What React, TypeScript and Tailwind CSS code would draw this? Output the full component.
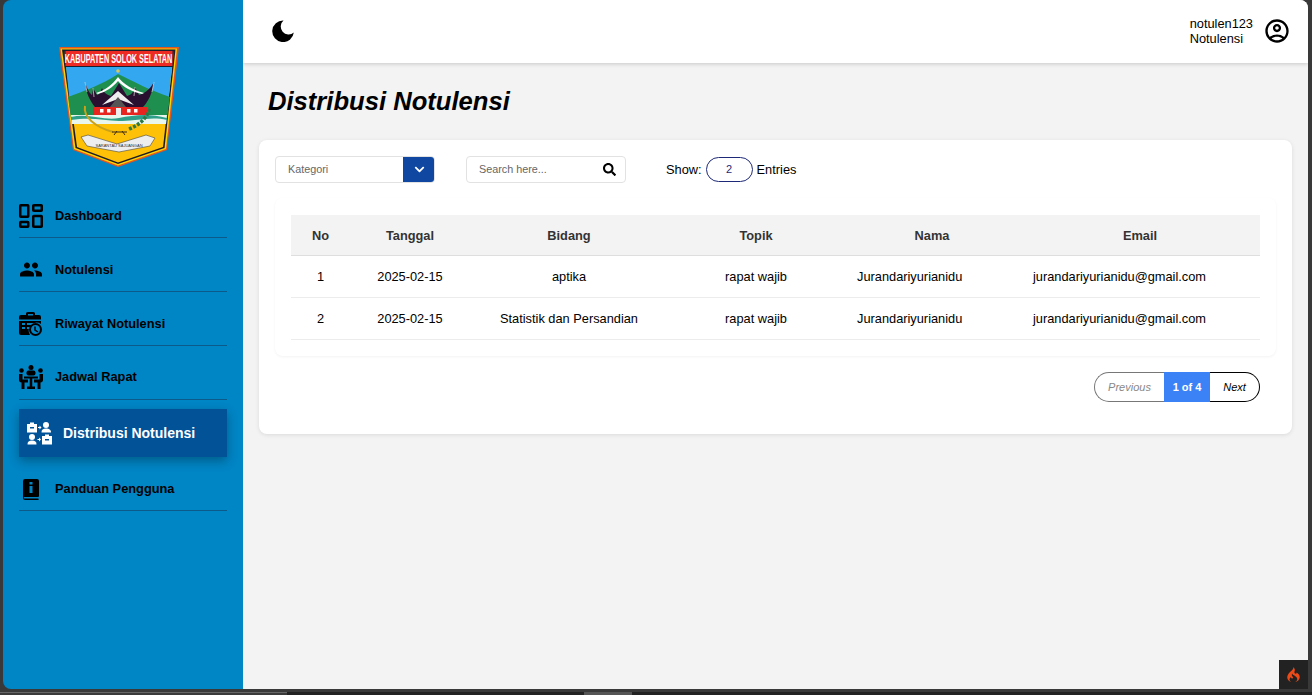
import { FaChevronDown, FaSearch } from "react-icons/fa";
import { MdPeople, MdOutlineAccountCircle } from "react-icons/md";
import { SiCodeigniter } from "react-icons/si";

const font = { fontFamily: '"Liberation Sans", Arial, sans-serif' };

const rows = [
  { no: 1, tanggal: "2025-02-15", bidang: "aptika" },
  { no: 2, tanggal: "2025-02-15", bidang: "Statistik dan Persandian" },
];

function Logo() {
  return (
    <svg width="120" height="120" viewBox="0 0 120 120">
      <path d="M0 0H120L108 103L59 120L14 103Z" fill="#e8561f" />
      <path d="M1.500 1.500H118L107 102L59 118.500L15 102Z" fill="#ffd400" />
      <path d="M3 2.500H116.500L105.500 101L59 117L16.500 101Z" fill="#1c1c2c" />
      <path d="M5 4H115L104 100L59 115.500L18 100Z" fill="#ffc107" />
      <path d="M5 3H115L114 20H6Z" fill="#1c1c2c" />
      <rect x="6.500" y="4" width="107" height="15" fill="#ee2a24" />
      <path d="M7 20H113L107 77H13Z" fill="#33a8f0" />
      <path d="M9 50C25 44 42 38 59 27C74 34 92 44 111 50L108 72H12Z" fill="#1e8f4f" />
      <path d="M12 68H108L107 77H13Z" fill="#e8f6ee" />
      <path d="M12 70C30 66 45 74 60 71S90 66 108 71V73C90 69 75 75 60 74S30 70 12 73Z" fill="#2f9f8a" />
      <path d="M26 35C27 46 31 54 36 60H84C90 54 93 46 95 35C90 44 84 47 80 48L76 40C74 46 72 48 68 49L60 36L52 49C48 48 45 46 43 41C41 46 40 48 38 48L34 41L33 48C30 46 28 41 26 35Z" fill="#2a1030" />
      <path d="M26 35L28 45M95 35L93 45M34 41L35 50M76 40L75 49" stroke="#ddd" strokeWidth=".7" />
      <path d="M37 46C47 43 54 37 59 30C64 37 74 43 85 46L83 47C73 45 64 40 59 34C54 40 47 45 39 47Z" fill="#fff" />
      <path d="M43 58L59 44L75 58L59 52Z" fill="#eee" />
      <path d="M51 60H67L59 50Z" fill="#555" />
      <circle cx="59" cy="24" r="1.800" fill="#d8c65a" />
      <rect x="34" y="60" width="54" height="8" fill="#e8261f" />
      <rect x="41" y="62" width="3.500" height="3.500" fill="#fff" />
      <rect x="48" y="62" width="3.500" height="3.500" fill="#fff" />
      <rect x="57" y="61" width="5" height="7" fill="#eee" />
      <rect x="68" y="62" width="3.500" height="3.500" fill="#fff" />
      <rect x="75" y="62" width="3.500" height="3.500" fill="#fff" />
      <path d="M26 59C24 70 36 80 54 85" fill="none" stroke="#caa21a" strokeWidth="2" />
      <path d="M53 85H68M55 88L58 84M66 88L63 84" stroke="#3a2a10" strokeWidth="1" fill="none" />
      <path d="M70 82C80 78 88 72 91 60" stroke="#2d7a45" strokeWidth="3.500" fill="none" strokeDasharray="3 1.500" />
      <path d="M22 90L29 88L58 97L87 88L96 91L91 99L60 105L28 99Z" fill="#eee" stroke="#444" strokeWidth=".6" />
      <text transform="translate(59.500 15.500) scale(.56 1)" textAnchor="middle" fontSize="13" fontWeight="700" fill="#fff" fontFamily="Liberation Sans, sans-serif">KABUPATEN SOLOK SELATAN</text>
      <text x="60" y="100" textAnchor="middle" fontSize="4" fill="#333" fontFamily="Liberation Sans, sans-serif">SARANTAU SAJUANGAN</text>
    </svg>
  );
}

function MoonIcon() {
  return (
    <svg width="22" height="22" viewBox="0 0 22 22" fill="#000">
      <path d="M11.500 .5A10.800 10.800 0 1 0 21.800 12.500A7.500 7.500 0 0 1 11.500 .5Z" />
    </svg>
  );
}

function DashboardIcon() {
  return (
    <svg width="24" height="24" viewBox="0 0 24 24" fill="none" stroke="currentColor" strokeWidth="2.500">
      <rect x="1.250" y="1.250" width="8" height="11.500" rx=".5" />
      <rect x="1.250" y="18" width="8" height="4.750" rx=".5" />
      <rect x="14.250" y="1.250" width="8.500" height="5.500" rx=".5" />
      <rect x="14.250" y="12" width="8.500" height="10.750" rx=".5" />
    </svg>
  );
}

function RiwayatIcon() {
  return (
    <svg width="24" height="24" viewBox="0 0 24 24" fill="currentColor">
      <path d="M2 3h5V1.500A1.500 1.500 0 0 1 8.500 0h6A1.500 1.500 0 0 1 16 1.500V3h4a2 2 0 0 1 2 2v7a8 8 0 0 0-11 11H2a2 2 0 0 1-2-2V5a2 2 0 0 1 2-2Z" />
      <rect x="9" y="2" width="5" height="1.500" fill="#0085c5" />
      <rect x="0" y="7.500" width="22" height="1.500" fill="#0085c5" />
      <rect x="3" y="11" width="3" height="2" fill="#0085c5" />
      <rect x="8" y="11" width="6" height="2" fill="#0085c5" />
      <rect x="3" y="15" width="3" height="2" fill="#0085c5" />
      <rect x="8" y="15" width="2.500" height="2" fill="#0085c5" />
      <circle cx="16.500" cy="17.500" r="5.500" fill="#0085c5" stroke="currentColor" strokeWidth="2" />
      <path d="M16 14.500v3.500l3 2" fill="none" stroke="currentColor" strokeWidth="1.500" />
    </svg>
  );
}

function MeetingIcon() {
  return (
    <svg width="24" height="24" viewBox="0 0 24 24" fill="currentColor">
      <circle cx="12" cy="2.500" r="2.500" />
      <circle cx="2.500" cy="5.500" r="2.300" />
      <circle cx="21.500" cy="5.500" r="2.300" />
      <rect x="7.500" y="5.500" width="9" height="5" rx="2" />
      <path d="M0 9h3.500v5.500H9v3H5.500V24h-3v-6.500C1 17.500 0 16.500 0 15Z" />
      <path d="M24 9h-3.500v5.500H15v3h3.500V24h3v-6.500c1.500 0 2.500-1 2.500-2.500Z" />
      <rect x="5" y="11.500" width="14" height="2" />
      <rect x="10.750" y="13" width="2.500" height="9" />
      <rect x="8" y="21.500" width="8" height="2.500" />
    </svg>
  );
}

function DistribusiIcon() {
  return (
    <svg width="25" height="23" viewBox="0 0 25 23" fill="currentColor">
      <path d="M0 2h3V.5h4V2h3v8.500H0Zm3 3v1.500h4V5Z" fillRule="evenodd" />
      <circle cx="19" cy="3" r="3" />
      <path d="M14.500 10.500c0-3 1.500-4 4.500-4s5 1 5 4Z" />
      <circle cx="5" cy="15" r="3" />
      <path d="M.5 22.500c0-3 1.500-4 4.500-4s4.500 1 4.500 4Z" />
      <path d="M15 14h3v-1.500h4V14h3v8.500H15Zm3 3v1.500h4V17Z" fillRule="evenodd" />
      <path d="M11 5h1.500V3.500L14.500 5.500 12.500 7.500V6H11ZM10.500 17h1.500V15.500L14 17.500 12 19.500V18h-1.500Z" />
    </svg>
  );
}

function GuideIcon() {
  return (
    <svg width="16" height="21" viewBox="0 0 16 21" fill="currentColor">
      <path d="M2 0h12a2 2 0 0 1 2 2v15a1 1 0 0 1-1 1H1.500a.500.500 0 0 0 0 1.500H15a.75.750 0 0 1 0 1.500H2a2 2 0 0 1-2-2V2a2 2 0 0 1 2-2Z" />
      <rect x="6.500" y="3" width="3" height="2.500" fill="#0085c5" />
      <rect x="6.500" y="7" width="3" height="7" fill="#0085c5" />
    </svg>
  );
}

function NavItem({ label, icon, className }: { label: string; icon: React.ReactNode; className: string }) {
  return (
    <div className={`flex w-[208px] items-center gap-3 border-b border-[#0b5a8a] ${className}`}>
      <div className="flex w-6 justify-center text-black">{icon}</div>
      <span className="text-[12.8px] font-bold text-black">{label}</span>
    </div>
  );
}

export default function App() {
  return (
    <div style={font} className="flex h-[695px] w-[1312px] flex-col overflow-hidden bg-[#393939]">
      <div className="flex h-[689px] pl-[3px] pr-[4px]">
        <aside className="flex w-[240px] flex-col items-center overflow-hidden rounded-l-lg bg-[#0085c5]">
          <div className="mt-[47px] mr-[9px] h-[120px] shrink-0">
            <Logo />
          </div>
          <nav className="mt-[17px] flex flex-col">
            <NavItem className="h-[54px] pt-[10px]" label="Dashboard" icon={<DashboardIcon />} />
            <NavItem className="h-[54px] pt-[10px]" label="Notulensi" icon={<MdPeople size={25} />} />
            <NavItem className="h-[54px] pt-[10px]" label="Riwayat Notulensi" icon={<RiwayatIcon />} />
            <NavItem className="h-[54px] pt-[8px]" label="Jadwal Rapat" icon={<MeetingIcon />} />
            <div className="mt-[9px] flex h-[48px] items-center gap-3 bg-[#025298] pl-2 text-white shadow-[0_4px_10px_rgba(0,0,0,0.3)]">
              <DistribusiIcon />
              <span className="ml-[-1px] text-sm font-bold">Distribusi Notulensi</span>
            </div>
            <NavItem className="h-[54px] pt-[11px]" label="Panduan Pengguna" icon={<GuideIcon />} />
          </nav>
        </aside>

        <main className="relative flex flex-1 flex-col overflow-hidden rounded-tr-lg bg-[#f3f3f3]">
          <header className="flex h-[63px] shrink-0 items-center justify-between bg-white pb-[1px] pl-[29px] pr-[17px] shadow-[0_1px_4px_rgba(0,0,0,0.18)]">
            <MoonIcon />
            <div className="mb-[1px] flex items-center gap-[10px]">
              <div className="text-[12.8px] leading-[15px] text-black">
                <div>notulen123</div>
                <div>Notulensi</div>
              </div>
              <MdOutlineAccountCircle size={28} className="text-black" />
            </div>
          </header>

          <h1 className="mt-[22px] ml-[25px] text-[25.6px] leading-[32px] font-bold text-black italic">Distribusi Notulensi</h1>

          <section className="mt-[23px] ml-[16px] mr-[16px] h-[294px] rounded-lg bg-white px-4 pt-4 shadow-[0_1px_4px_rgba(0,0,0,0.1)]">
            <div className="flex items-center">
              <div className="flex h-[27px] w-[160px] overflow-hidden rounded border border-[#e2e2e2]">
                <div className="flex flex-1 items-center pl-3 text-[10.8px] text-[#666]">Kategori</div>
                <div className="mr-[-1px] flex w-[32px] items-center justify-center bg-[#0f47a1] text-white">
                  <FaChevronDown size={11} />
                </div>
              </div>
              <div className="ml-[31px] flex h-[27px] w-[160px] items-center justify-between rounded border border-[#e2e2e2] pl-3 pr-[9px]">
                <span className="text-[10.8px] text-[#666]">Search here...</span>
                <FaSearch size={13} className="text-black" />
              </div>
              <div className="ml-[40px] flex items-center text-[12.8px] text-black">
                <span>Show:</span>
                <div className="mx-1 flex h-[25px] w-[47px] items-center justify-center rounded-full border border-[#1e2a78] text-[11px] text-[#1e2a78]">2</div>
                <span>Entries</span>
              </div>
            </div>

            <div className="mt-[15px] h-[158px] rounded-lg bg-white px-4 pt-[17px] shadow-[0_1px_3px_rgba(0,0,0,0.05)]">
              <table className="w-[969px] table-fixed border-collapse text-[12.8px] text-black">
                <colgroup>
                  <col className="w-[59px]" />
                  <col className="w-[120px]" />
                  <col className="w-[198px]" />
                  <col className="w-[176px]" />
                  <col className="w-[176px]" />
                  <col className="w-[240px]" />
                </colgroup>
                <thead>
                  <tr className="h-[40px] border-b border-[#dedede] bg-[#f3f3f3] text-[#333]">
                    <th className="pt-[2px] font-bold">No</th>
                    <th className="pt-[2px] font-bold">Tanggal</th>
                    <th className="pt-[2px] font-bold">Bidang</th>
                    <th className="pt-[2px] font-bold">Topik</th>
                    <th className="pt-[2px] font-bold">Nama</th>
                    <th className="pt-[2px] font-bold">Email</th>
                  </tr>
                </thead>
                <tbody>
                  {rows.map((r) => (
                    <tr key={r.no} className="h-[42px] border-b border-[#ececec]">
                      <td className="pt-[2px] text-center">{r.no}</td>
                      <td className="pt-[2px] text-center">{r.tanggal}</td>
                      <td className="pt-[2px] text-center">{r.bidang}</td>
                      <td className="pt-[2px] text-center">rapat wajib</td>
                      <td className="pt-[2px] pl-[13px]">Jurandariyurianidu</td>
                      <td className="pt-[2px] pl-[13px]">jurandariyurianidu@gmail.com</td>
                    </tr>
                  ))}
                </tbody>
              </table>
            </div>

            <div className="mt-4 flex justify-end pr-4">
              <div className="flex h-[30px] text-[11px]">
                <div className="flex w-[70px] items-center justify-center rounded-l-full border border-r-0 border-[#777] text-[#888] italic">Previous</div>
                <div className="flex w-[46px] items-center justify-center bg-[#3b82f6] font-bold text-white">1 of 4</div>
                <div className="flex w-[50px] items-center justify-center rounded-r-full border border-l-0 border-black text-black italic">Next</div>
              </div>
            </div>
          </section>

          <div className="absolute right-0 bottom-0 flex h-[29px] w-[29px] items-center justify-center bg-[#222]">
            <SiCodeigniter size={15} className="text-[#ee4a17]" />
          </div>
        </main>
      </div>
      <div className="mt-[3px] flex h-[3px] bg-[#222]">
        <div className="w-[287px] border-t border-[#666] bg-[#3a3a3a]" />
        <div className="ml-[297px] w-[48px] bg-[#555]" />
      </div>
    </div>
  );
}
